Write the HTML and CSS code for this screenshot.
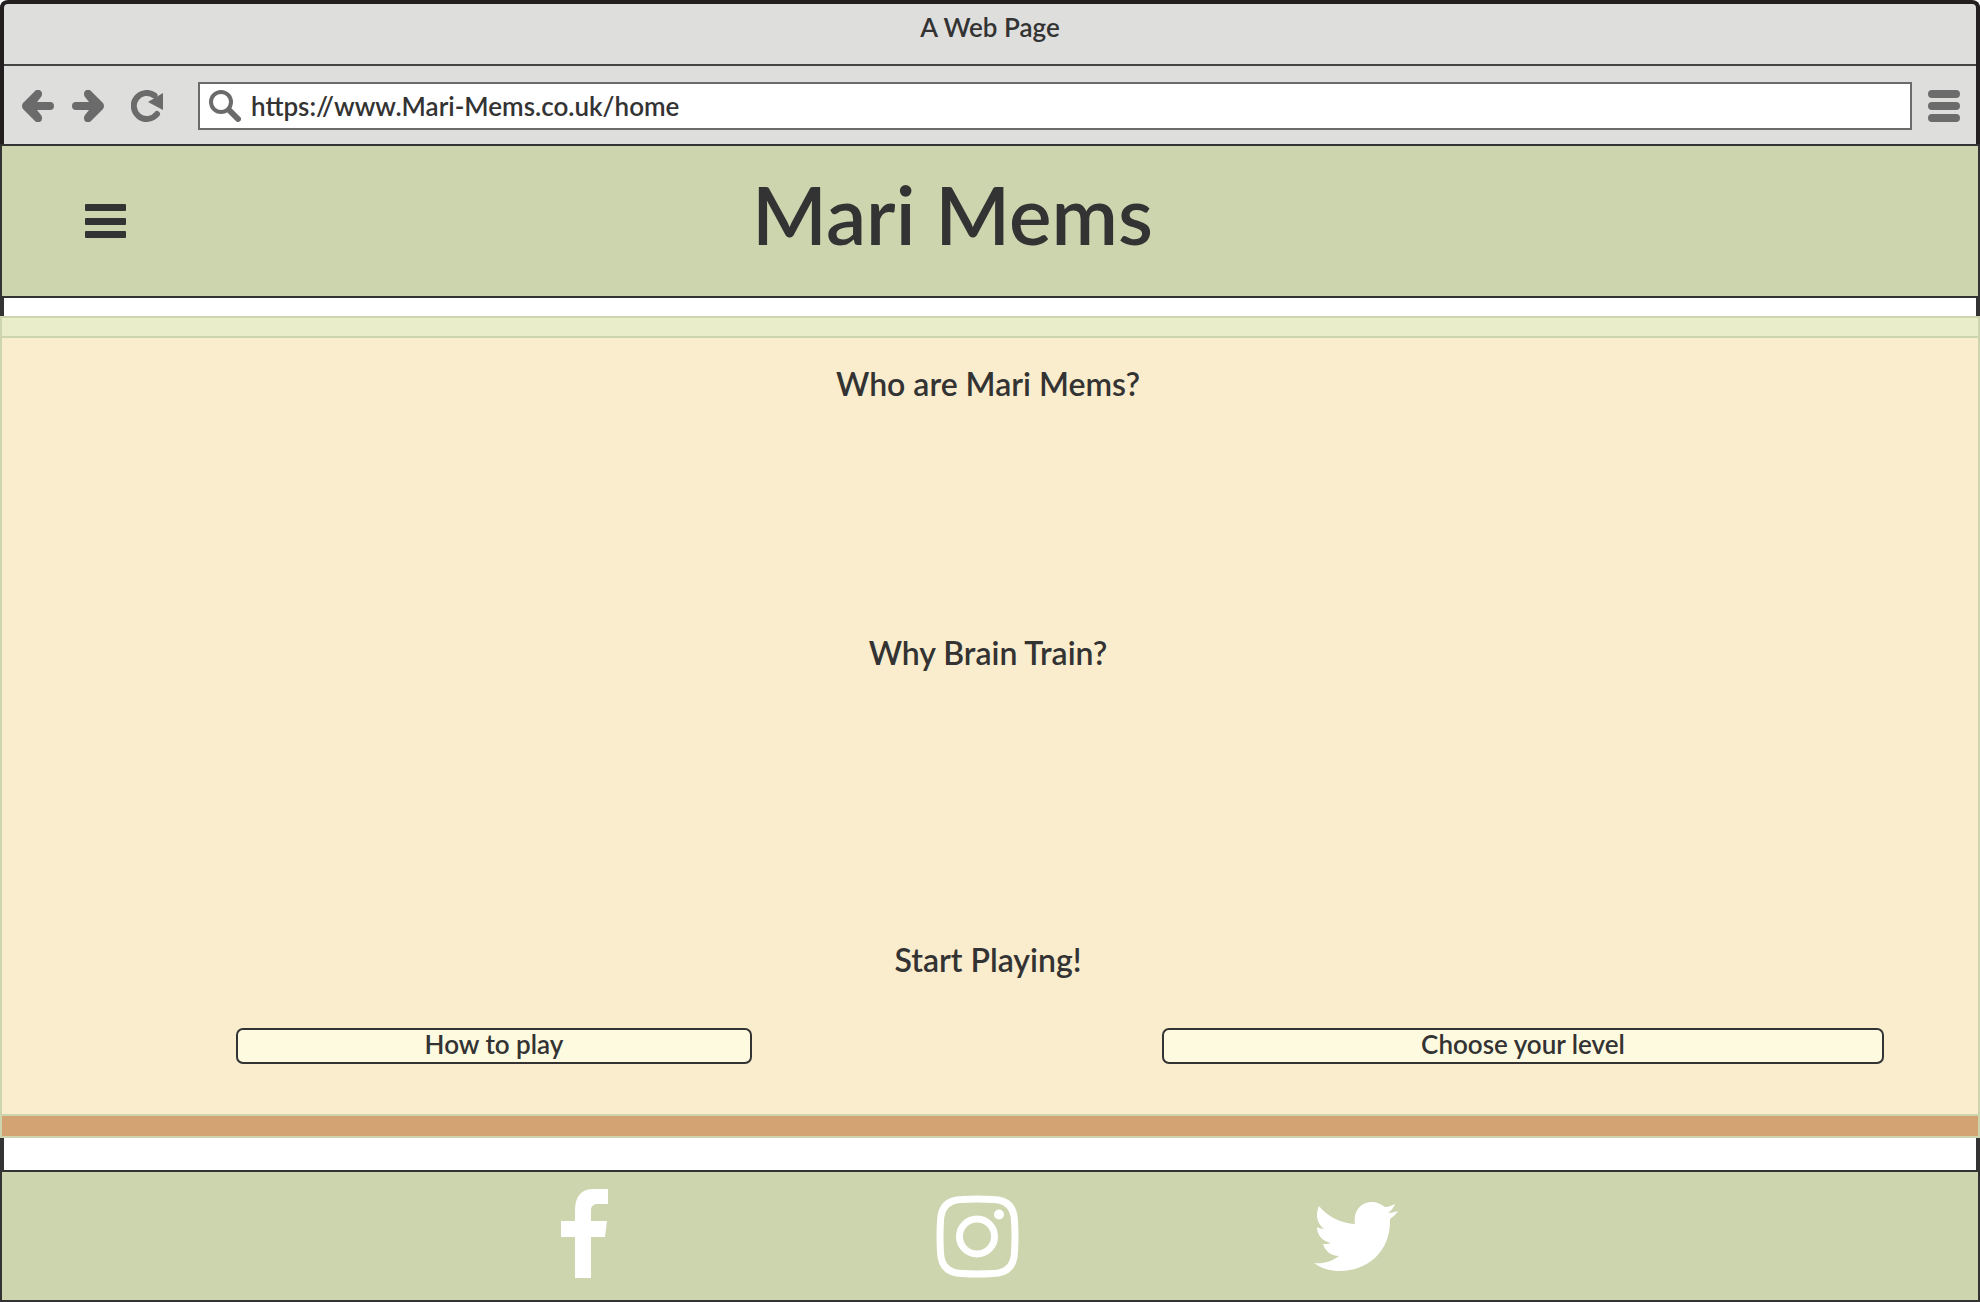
FILE: index.html
```html
<!DOCTYPE html>
<html lang="en">
<head>
<meta charset="utf-8">
<meta name="viewport" content="width=device-width, initial-scale=1">
<title>Mari Mems</title>
<link rel="stylesheet" href="styles.css">
</head>
<body>
<div class="window">
  <div class="chrome">
    <div class="titlebar">A Web Page</div>
    <div class="toolbar">
      <div class="history">
        <button class="tool" type="button" aria-label="Back">
          <svg width="32" height="32" viewBox="0 0 32 32"><path class="solid" d="M1 13 13 1a4 4 0 0 1 7 3q0 2-1 3l-4 5h13a4 4 0 0 1 0 8H15l4 5q1 1 1 3a4 4 0 0 1-7 3L1 19q-2-3 0-6z"/></svg>
        </button>
        <button class="tool" type="button" aria-label="Forward">
          <svg width="32" height="32" viewBox="0 0 32 32"><path class="solid" d="M31 13 19 1a4 4 0 0 0-7 3q0 2 1 3l4 5H4a4 4 0 0 0 0 8h13l-4 5q-1 1-1 3a4 4 0 0 0 7 3l12-12q2-3 0-6z"/></svg>
        </button>
      </div>
      <button class="tool reload" type="button" aria-label="Reload">
        <svg width="32" height="32" viewBox="0 0 32 32"><path d="M26 24A13 13 0 1 1 23.500 5.500"/><path class="solid" d="M32 3v17L17 12z"/></svg>
      </button>
      <label class="address">
        <svg width="32" height="32" viewBox="0 0 32 32" aria-hidden="true"><circle class="lens" cx="12" cy="12" r="10"/><path class="handle" d="M20 20l9 9"/></svg>
        <input type="text" aria-label="Address" value="https://www.Mari-Mems.co.uk/home">
      </label>
      <button class="tool" type="button" aria-label="Browser menu">
        <svg width="32" height="32" viewBox="0 0 32 32"><path class="bars" d="M4 4h24M4 16h24M4 28h24"/></svg>
      </button>
    </div>
  </div>

  <header class="site-header">
    <button class="menu" type="button" aria-label="Menu">
      <svg width="42" height="36" viewBox="0 0 42 36"><rect y="1" width="41" height="7" rx="1"/><rect y="15" width="41" height="7" rx="1"/><rect y="28" width="41" height="7" rx="1"/></svg>
    </button>
    <h1>Mari Mems</h1>
  </header>

  <main class="content">
    <div class="strip strip-top"></div>
    <section class="about"><h2>Who are Mari Mems?</h2></section>
    <section class="why"><h2>Why Brain Train?</h2></section>
    <section class="play">
      <h2>Start Playing!</h2>
      <div class="actions">
        <button class="action" type="button">How to play</button>
        <button class="action" type="button">Choose your level</button>
      </div>
    </section>
    <div class="strip strip-bottom"></div>
  </main>

  <footer class="site-footer">
    <a class="facebook" href="#" aria-label="Facebook">
      <svg width="48" height="90" viewBox="0 0 48 90"><path d="M14 89V48H0V32h14V22C14 7 20 0 33 0h14v15H37c-5 0-7 2-7 7v10h16l-2 16H30v41z"/></svg>
    </a>
    <a class="instagram" href="#" aria-label="Instagram">
      <svg width="84" height="84" viewBox="0 0 84 84"><path d="M26 4.500Q41 3.500 57 4.500 78 5 78.500 26 79.500 41 78.500 57 78 78 57 78.500 41 79.500 26 78.500 5 78 4.500 57 3.500 41 4.500 26 5 5 26 4.500z"/><circle cx="41" cy="41.500" r="17.500"/><circle class="solid" cx="63" cy="19.500" r="5"/></svg>
    </a>
    <a class="twitter" href="#" aria-label="Twitter">
      <svg width="84" height="70" viewBox="0 0 84 70"><path d="M0 61c9 1 17-1 25-7-8 0-14-5-16-12 3 0 5 0 8-1C8 39 3 33 3 25c2 1 5 2 7 2C3 21 1 13 5 4c9 11 21 17 36 18C39 9 47 0 58 0c5 0 9 2 13 5 4 0 7-2 10-3-1 3-3 6-7 9 3 0 6-1 10-2-2 3-5 6-8 8 1 33-23 52-50 52C17 69 8 67 0 61z"/></svg>
    </a>
  </footer>
</div>
</body>
</html>
```
FILE: styles.css
```css
:root {
  --ink: #333;
  --frame: #231f20;
  --sage: #ccd5ae;
  --icon: #6b6b6b;
}

* { box-sizing: border-box; }

body {
  margin: 0;
  background: #fff;
  color: var(--ink);
  font-family: Lato, "Liberation Sans", sans-serif;
  font-weight: 600;
}

button {
  margin: 0;
  padding: 0;
  border: 0;
  background: none;
  color: inherit;
  font: inherit;
  cursor: pointer;
}

svg { display: block; }

h1, h2 { margin: 0; font-weight: 600; }

/* The frame's side edges show as bars in the gaps between the page's bands. */
.window {
  display: flex;
  flex-direction: column;
  min-height: 100vh;
  border-radius: 8px 8px 0 0;
  background: linear-gradient(var(--ink), var(--ink)) left / 4px 100% no-repeat,
              linear-gradient(var(--ink), var(--ink)) right / 4px 100% no-repeat;
}

.chrome {
  border: 4px solid var(--frame);
  border-bottom: 0;
  border-radius: 8px 8px 0 0;
  background: #dededc;
}

.titlebar {
  height: 62px;
  padding-top: 7px;
  border-bottom: 2px solid #444;
  font-size: 26px;
  line-height: 32px;
  text-align: center;
}

.toolbar {
  display: flex;
  align-items: center;
  gap: 16px;
  height: 78px;
  padding: 2px 16px 0 18px;
}

.history { display: flex; gap: 18px; }

.tool svg {
  fill: none;
  stroke: var(--icon);
  stroke-width: 6px;
  stroke-linecap: round;
  stroke-linejoin: round;
}

.tool .bars { stroke-width: 8px; }
.tool .solid { fill: var(--icon); stroke: none; }
.reload { margin: 0 19px 0 11px; }

.address {
  display: flex;
  flex: 1;
  align-items: center;
  gap: 10px;
  height: 48px;
  padding: 0 9px;
  border: 2px solid var(--icon);
  background: #fff;
}

.address svg { fill: none; stroke: var(--icon); stroke-width: 4px; }
.address .handle { stroke-width: 6px; stroke-linecap: round; }

.address input {
  flex: 1;
  min-width: 0;
  padding: 0;
  border: 0;
  outline: 0;
  background: none;
  color: inherit;
  font: inherit;
  font-size: 26px;
}

.site-header {
  display: grid;
  grid-template-columns: 125px 1fr 200px;
  align-items: center;
  height: 154px;
  border: 2px solid var(--ink);
  background: var(--sage);
}

.menu { justify-self: end; fill: var(--ink); }

.site-header h1 {
  padding-bottom: 14px;
  font-size: 80px;
  line-height: 96px;
  text-align: center;
}

.content {
  display: flex;
  flex: 1;
  flex-direction: column;
  margin-top: 18px;
  border: 2px solid var(--sage);
  background: #faedcd;
  text-align: center;
}

.content h2 { padding-right: 4px; font-size: 32px; line-height: 40px; }

.strip { flex: none; height: 20px; }
.strip-top { border-bottom: 2px solid var(--sage); background: #e9edc9; }
.strip-bottom { height: 22px; border-top: 2px solid var(--sage); background: #d4a373; }

.about { height: 269px; padding-top: 26px; }
.why { height: 307px; padding-top: 26px; }
.play { flex: 1; padding-top: 26px; }

.actions {
  display: grid;
  grid-template-columns: 516fr 722fr;
  column-gap: 410px;
  padding: 48px 94px 50px 234px;
}

.action {
  height: 36px;
  padding-bottom: 4px;
  border: 2px solid var(--ink);
  border-radius: 7px;
  background: #fefae0;
  font-size: 26px;
  line-height: 28px;
}

.site-footer {
  display: flex;
  align-items: flex-end;
  justify-content: center;
  height: 132px;
  margin-top: 32px;
  padding: 0 22px 21px 0;
  border: 2px solid var(--ink);
  background: var(--sage);
}

.site-footer svg { fill: #fff; }
.instagram svg { fill: none; stroke: #fff; stroke-width: 7px; }
.instagram .solid { fill: #fff; stroke: none; }
.instagram { margin: 0 294px 0 327px; }
.twitter { margin-bottom: 7px; }
```
